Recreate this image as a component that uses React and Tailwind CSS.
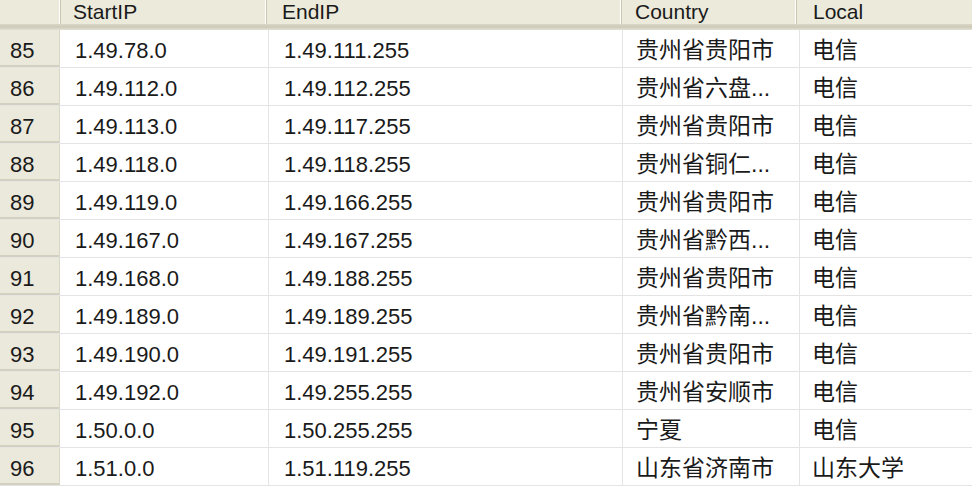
import React from "react";

const rows = [
  ["85", "1.49.78.0", "1.49.111.255", "贵州省贵阳市", "电信"],
  ["86", "1.49.112.0", "1.49.112.255", "贵州省六盘...", "电信"],
  ["87", "1.49.113.0", "1.49.117.255", "贵州省贵阳市", "电信"],
  ["88", "1.49.118.0", "1.49.118.255", "贵州省铜仁...", "电信"],
  ["89", "1.49.119.0", "1.49.166.255", "贵州省贵阳市", "电信"],
  ["90", "1.49.167.0", "1.49.167.255", "贵州省黔西...", "电信"],
  ["91", "1.49.168.0", "1.49.188.255", "贵州省贵阳市", "电信"],
  ["92", "1.49.189.0", "1.49.189.255", "贵州省黔南...", "电信"],
  ["93", "1.49.190.0", "1.49.191.255", "贵州省贵阳市", "电信"],
  ["94", "1.49.192.0", "1.49.255.255", "贵州省安顺市", "电信"],
  ["95", "1.50.0.0", "1.50.255.255", "宁夏", "电信"],
  ["96", "1.51.0.0", "1.51.119.255", "山东省济南市", "山东大学"],
];

const font = { fontFamily: '"Liberation Sans", "Noto Sans CJK SC", sans-serif' };

const HeaderCell = ({ children, className }) => (
  <div className={`flex items-center h-full border-r border-[#c9c6b3] shadow-[inset_-1px_0_0_#ffffff] text-[21px] text-[#1a1a1a] ${className}`}>
    {children}
  </div>
);

const App = () => {
  return (
    <div className="w-[972px] h-[488px] bg-white overflow-hidden" style={font}>
      <div className="flex h-[24px] bg-[#ebeadb]">
        <HeaderCell className="w-[61px] shrink-0" />
        <HeaderCell className="w-[206px] shrink-0 pl-[12px]">StartIP</HeaderCell>
        <HeaderCell className="w-[355px] shrink-0 pl-[15px]">EndIP</HeaderCell>
        <HeaderCell className="w-[175px] shrink-0 pl-[13px]">Country</HeaderCell>
        <div className="flex items-center flex-1 pl-[16px] text-[21px] text-[#1a1a1a]">Local</div>
      </div>
      <div className="h-[6px] bg-gradient-to-b from-[#dad7c7] via-[#cdcab9] to-[#e4e2d5]" />
      <div>
        {rows.map((r) => (
          <div key={r[0]} className="flex h-[38px] border-b border-[#e4e4e4]">
            <div className="w-[60px] shrink-0 flex items-center pt-[3px] pl-[10px] bg-[#ebe9dc] border-r border-[#d8d6c9] shadow-[inset_0_-2px_0_#d3d0c0] text-[22px] text-[#1a1a1a]">
              {r[0]}
            </div>
            <div className="w-[209px] shrink-0 flex items-center pt-[3px] pl-[15px] border-r border-[#e4e4e4] text-[22px] text-[#1a1a1a]">
              {r[1]}
            </div>
            <div className="w-[354px] shrink-0 flex items-center pt-[3px] pl-[15px] border-r border-[#e4e4e4] text-[22px] text-[#1a1a1a]">
              {r[2]}
            </div>
            <div className="w-[177px] shrink-0 flex items-center pt-[3px] pl-[13px] border-r border-[#e4e4e4] text-[23px] text-[#1a1a1a] whitespace-nowrap">
              {r[3]}
            </div>
            <div className="flex-1 flex items-center pt-[3px] pl-[12px] text-[23px] text-[#1a1a1a] whitespace-nowrap">
              {r[4]}
            </div>
          </div>
        ))}
      </div>
    </div>
  );
};

export default App;
